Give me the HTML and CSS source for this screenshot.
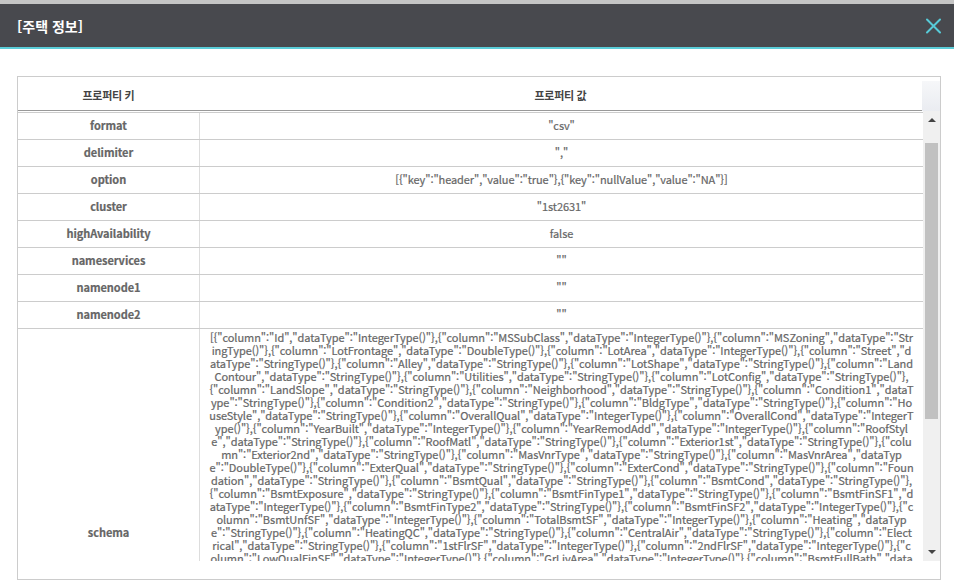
FILE: index.html
```html
<!DOCTYPE html>
<html lang="ko">
<head>
<meta charset="utf-8">
<title>주택 정보</title>
<link rel="stylesheet" href="styles.css">
</head>
<body>
<header class="titlebar">
  <h1>[주택 정보]</h1>
  <svg class="close" width="17" height="17" viewBox="0 0 17 17"><path d="M2 2.5 15 15.5M15 2.5 2 15.5"/></svg>
</header>
<main class="panel">
  <div class="head">
    <div class="head-key">프로퍼티 키</div>
    <div class="head-value">프로퍼티 값</div>
    <div class="head-corner"></div>
  </div>
  <div class="body">
    <div class="rows">
      <div class="row"><div class="key">format</div><div class="value">"csv"</div></div>
      <div class="row"><div class="key">delimiter</div><div class="value">","</div></div>
      <div class="row"><div class="key">option</div><div class="value">[{"key":"header","value":"true"},{"key":"nullValue","value":"NA"}]</div></div>
      <div class="row"><div class="key">cluster</div><div class="value">"1st2631"</div></div>
      <div class="row"><div class="key">highAvailability</div><div class="value">false</div></div>
      <div class="row"><div class="key">nameservices</div><div class="value">""</div></div>
      <div class="row"><div class="key">namenode1</div><div class="value">""</div></div>
      <div class="row"><div class="key">namenode2</div><div class="value">""</div></div>
      <div class="row schema"><div class="key">schema</div><div class="value">[{"column":"Id","dataType":"IntegerType()"},{"column":"MSSubClass","dataType":"IntegerType()"},{"column":"MSZoning","dataType":"Str
ingType()"},{"column":"LotFrontage","dataType":"DoubleType()"},{"column":"LotArea","dataType":"IntegerType()"},{"column":"Street","d
ataType":"StringType()"},{"column":"Alley","dataType":"StringType()"},{"column":"LotShape","dataType":"StringType()"},{"column":"Land
Contour","dataType":"StringType()"},{"column":"Utilities","dataType":"StringType()"},{"column":"LotConfig","dataType":"StringType()"},
{"column":"LandSlope","dataType":"StringType()"},{"column":"Neighborhood","dataType":"StringType()"},{"column":"Condition1","dataT
ype":"StringType()"},{"column":"Condition2","dataType":"StringType()"},{"column":"BldgType","dataType":"StringType()"},{"column":"Ho
useStyle","dataType":"StringType()"},{"column":"OverallQual","dataType":"IntegerType()"},{"column":"OverallCond","dataType":"IntegerT
ype()"},{"column":"YearBuilt","dataType":"IntegerType()"},{"column":"YearRemodAdd","dataType":"IntegerType()"},{"column":"RoofStyl
e","dataType":"StringType()"},{"column":"RoofMatl","dataType":"StringType()"},{"column":"Exterior1st","dataType":"StringType()"},{"colu
mn":"Exterior2nd","dataType":"StringType()"},{"column":"MasVnrType","dataType":"StringType()"},{"column":"MasVnrArea","dataTyp
e":"DoubleType()"},{"column":"ExterQual","dataType":"StringType()"},{"column":"ExterCond","dataType":"StringType()"},{"column":"Foun
dation","dataType":"StringType()"},{"column":"BsmtQual","dataType":"StringType()"},{"column":"BsmtCond","dataType":"StringType()"},
{"column":"BsmtExposure","dataType":"StringType()"},{"column":"BsmtFinType1","dataType":"StringType()"},{"column":"BsmtFinSF1","d
ataType":"IntegerType()"},{"column":"BsmtFinType2","dataType":"StringType()"},{"column":"BsmtFinSF2","dataType":"IntegerType()"},{"c
olumn":"BsmtUnfSF","dataType":"IntegerType()"},{"column":"TotalBsmtSF","dataType":"IntegerType()"},{"column":"Heating","dataTyp
e":"StringType()"},{"column":"HeatingQC","dataType":"StringType()"},{"column":"CentralAir","dataType":"StringType()"},{"column":"Elect
rical","dataType":"StringType()"},{"column":"1stFlrSF","dataType":"IntegerType()"},{"column":"2ndFlrSF","dataType":"IntegerType()"},{"c
olumn":"LowQualFinSF","dataType":"IntegerType()"},{"column":"GrLivArea","dataType":"IntegerType()"},{"column":"BsmtFullBath","data</div></div>
    </div>
    <div class="scrollbar">
      <svg class="arrow" width="8" height="4" viewBox="0 0 8 4"><path d="M0 4 4 0 8 4z"/></svg>
      <div class="thumb"></div>
      <svg class="arrow" width="8" height="4" viewBox="0 0 8 4"><path d="M0 0 4 4 8 0z"/></svg>
    </div>
  </div>
</main>
</body>
</html>
```
FILE: styles.css
```css
* { box-sizing: border-box; }
html, body { height: 100%; }
body {
  margin: 0;
  overflow: hidden;
  background: #fff;
  color: #666;
  font: 11px/13px "Noto Sans CJK KR", sans-serif;
}
.titlebar {
  display: flex;
  align-items: center;
  justify-content: space-between;
  height: 49px;
  padding: 0 12px 0 17px;
  border-top: 4px solid #c5c5c5;
  border-bottom: 2px solid #5bcdd8;
  background: #48494e;
}
.titlebar h1 {
  margin: 0;
  color: #fff;
  font-size: 14px;
  line-height: 20px;
  font-weight: 700;
}
.close { fill: none; stroke: #57cbd8; stroke-width: 2; stroke-linecap: round; }
.panel {
  width: 924px;
  height: 504px;
  margin: 27px 0 0 17px;
  border: 1px solid #ccc;
}
.head {
  display: grid;
  grid-template-columns: 181px 723px 18px;
  height: 34px;
  color: #444;
  font-weight: 700;
  letter-spacing: -0.3px;
  text-align: center;
}
.head-key, .head-value {
  padding-top: 12px;
  border-bottom: 1px solid #999;
}
.head-corner {
  margin-top: 4px;
  background: linear-gradient(#f6f7f9, #eaecf1);
}
.body { display: flex; height: 450px; }
.rows { width: 905px; height: 450px; overflow: hidden; border-top: 1px solid #fff; }
.row {
  display: grid;
  grid-template-columns: 182px 723px;
  height: 27px;
  border-top: 1px solid #ccc;
  line-height: 25px;
  text-align: center;
  white-space: nowrap;
}
.key { border-right: 1px solid #ddd; font-weight: 700; letter-spacing: -0.05px; -webkit-text-stroke: 0.2px #666; }
.value { font-weight: 400; letter-spacing: -0.08px; -webkit-text-stroke: 0.2px #666; }
.schema { height: 410px; }
.schema .key { line-height: 407px; }
.schema .value { padding-top: 2px; line-height: 13px; letter-spacing: -0.05px; white-space: pre; }
.scrollbar {
  display: flex;
  flex-direction: column;
  align-items: center;
  width: 17px;
  padding: 7px 0;
  background: #f0f0f0;
}
.arrow { flex: none; fill: #444; }
.thumb { width: 13px; height: 276px; margin: 21px 0 auto; background: #c1c1c1; }
```
